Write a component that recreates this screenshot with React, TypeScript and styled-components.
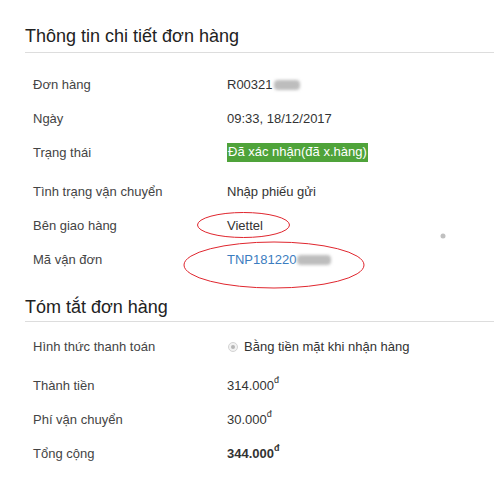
import React from "react";
import styled, { createGlobalStyle } from "styled-components";

const GlobalStyle = createGlobalStyle`
  html, body {
    margin: 0;
    background: #fff;
  }
  body {
    font-family: "Liberation Sans", Arial, sans-serif;
    color: #333;
  }
`;

const Page = styled.div`
  position: relative;
  width: 494px;
  height: 480px;
  overflow: hidden;
  padding-left: 25px;
  box-sizing: border-box;
`;

const Title = styled.h3<{ $top: number; $bottom: number; $after: number }>`
  margin: 0 0 ${(p) => p.$after}px;
  padding: ${(p) => p.$top}px 0 ${(p) => p.$bottom}px;
  font-size: 18px;
  line-height: 22px;
  font-weight: normal;
  color: #222;
  border-bottom: 1px solid #ddd;
`;

const Row = styled.div<{ $h?: number; $pad?: number }>`
  display: grid;
  grid-template-columns: 202px 1fr;
  height: ${(p) => p.$h ?? 34}px;
  align-items: ${(p) => (p.$pad !== undefined ? "start" : "center")};
  padding-top: ${(p) => p.$pad ?? 0}px;
  box-sizing: border-box;
  font-size: 13px;
  line-height: 16px;
`;

const Label = styled.div<{ $nudge?: number }>`
  padding-left: 8px;
  padding-top: ${(p) => p.$nudge ?? 0}px;
  color: #444;
`;

const Value = styled.div`
  display: flex;
  align-items: center;
  color: #333;
`;

const Badge = styled.span`
  background: #4fa33a;
  color: #fff;
  padding: 1px 1px 2px;
  line-height: 16px;
`;

const Link = styled.a`
  color: #3b7dc0;
  text-decoration: none;
`;

const Masked = styled.span<{ $w: number }>`
  display: inline-block;
  width: ${(p) => p.$w}px;
  height: 10px;
  margin-left: 1px;
  border-radius: 4px;
  background: #bdbdbd;
  filter: blur(1.5px);
`;

const Radio = styled.span`
  position: relative;
  display: inline-block;
  width: 10px;
  height: 10px;
  margin: 0 6px 0 1px;
  border-radius: 50%;
  border: 1px solid #d4d4d4;
  background: #f2f2f2;
  box-sizing: border-box;
  &::after {
    content: "";
    position: absolute;
    left: 2px;
    top: 2px;
    width: 4px;
    height: 4px;
    border-radius: 50%;
    background: #b5b5b5;
  }
`;

const Currency = styled.sup`
  font-size: 9px;
  line-height: 0;
  position: relative;
  top: -2px;
`;

const Money = styled.span<{ $bold?: boolean }>`
  font-weight: ${(p) => (p.$bold ? "bold" : "normal")};
`;

const Marks = styled.svg`
  position: absolute;
  left: 0;
  top: 0;
  pointer-events: none;
`;

const Price = ({ amount, bold }: { amount: string; bold?: boolean }) => (
  <Money $bold={bold}>
    {amount}
    <Currency>đ</Currency>
  </Money>
);

export default function App() {
  return (
    <>
      <GlobalStyle />
      <Page>
        <Title $top={25} $bottom={5} $after={15}>
          Thông tin chi tiết đơn hàng
        </Title>
        <Row>
          <Label>Đơn hàng</Label>
          <Value>
            R00321
            <Masked $w={26} />
          </Value>
        </Row>
        <Row>
          <Label>Ngày</Label>
          <Value>09:33, 18/12/2017</Value>
        </Row>
        <Row $h={39} $pad={7}>
          <Label $nudge={2}>Trạng thái</Label>
          <Value>
            <Badge>Đã xác nhận(đã x.hàng)</Badge>
          </Value>
        </Row>
        <Row>
          <Label>Tình trạng vận chuyển</Label>
          <Value>Nhập phiếu gửi</Value>
        </Row>
        <Row>
          <Label>Bên giao hàng</Label>
          <Value>Viettel</Value>
        </Row>
        <Row>
          <Label>Mã vận đơn</Label>
          <Value>
            <Link href="#">TNP181220</Link>
            <Masked $w={34} />
          </Value>
        </Row>

        <Title $top={19} $bottom={3} $after={8}>
          Tóm tắt đơn hàng
        </Title>
        <Row $h={39} $pad={9}>
          <Label>Hình thức thanh toán</Label>
          <Value>
            <Radio />
            Bằng tiền mặt khi nhận hàng
          </Value>
        </Row>
        <Row>
          <Label>Thành tiền</Label>
          <Value>
            <Price amount="314.000" />
          </Value>
        </Row>
        <Row>
          <Label>Phí vận chuyển</Label>
          <Value>
            <Price amount="30.000" />
          </Value>
        </Row>
        <Row>
          <Label>Tổng cộng</Label>
          <Value>
            <Price amount="344.000" bold />
          </Value>
        </Row>

        <Marks width="494" height="480" viewBox="0 0 494 480">
          <ellipse cx="243.5" cy="225" rx="46" ry="12.5" fill="none" stroke="#e0262e" strokeWidth="1" />
          <ellipse cx="274" cy="265" rx="90" ry="23" fill="none" stroke="#e0262e" strokeWidth="1" />
          <circle cx="443" cy="236" r="2.5" fill="#b0b0b0" opacity="0.8" />
        </Marks>
      </Page>
    </>
  );
}
